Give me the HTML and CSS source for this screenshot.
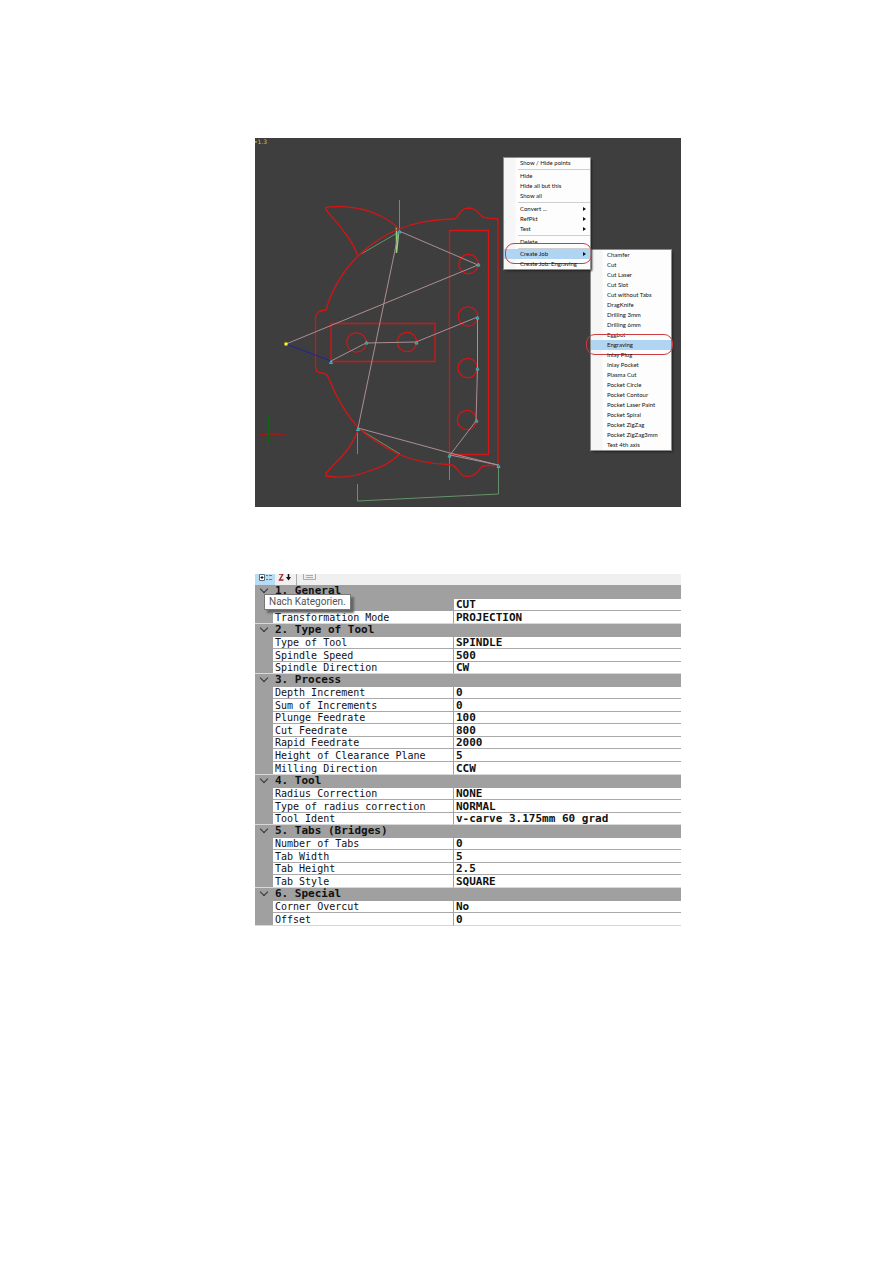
FILE: index.html
```html
<!DOCTYPE html>
<html lang="en">
<head>
<meta charset="utf-8">
<title>Create Job: Engraving</title>
<link rel="stylesheet" href="styles.css">
</head>
<body>
<main class="page">
  <section class="viewer" aria-label="Drawing">
    <svg class="drawing" viewBox="255 138 426 369" aria-hidden="true">
      <g class="green">
        <path d="M399.500 200V230M399 232L361 254M359 429L400 454M357.500 430V454M449.500 455V480M357.500 484V501L498.500 494V466"/>
        <path class="bright" d="M396.500 227V253M398.500 234L396.500 253"/>
      </g>
      <g class="red">
        <path d="M325.500 208C329 206 350 206 360 209C371 211 391 219 398 229"/>
        <path d="M325.500 208C327 214 335 218 345 233Q353 243 358 256"/>
        <path d="M498 465V219C493 218 484 219 481.500 216C477 212 476 208 468 208C461 209 460 213 457 217Q456 219 453 219C431 220 415 222 398 229.500C386 234 371 244 358 256C343 271 332 289 326 310L320 311Q316 313 315.500 318V367Q316 373 322 373Q327 373 329 379C337 399 346 414 358 427.500Q374 442 398 454C414 461 432 464 449 464.500Q454 465 457 469C461 475 463 476.500 468 476.500C475 476 478 472 481 467.500Q482 465.500 487 465.500H498"/>
        <path d="M358 430Q353 443 346.500 451C340 459 330 468 326 473.500V476C344 479 358 475 365 472.500C377 469 391 463 399 454.500"/>
        <path d="M449.500 230.500H488.500V454.500H449.500ZM331 323.500H435V361.500H331Z"/>
        <circle cx="468.500" cy="264" r="9.700"/><circle cx="468" cy="316.500" r="9.700"/>
        <circle cx="467.700" cy="368" r="9.700"/><circle cx="467" cy="420" r="9.700"/>
        <circle cx="356.500" cy="342.500" r="9.700"/><circle cx="407" cy="342" r="9.700"/>
      </g>
      <path class="axis-x" d="M259 434.500H286"/>
      <path class="axis-y" d="M268.500 416V443"/>
      <path class="rapid" d="M286 344L478 265L399 231L358 428L450 453L498 465L450 455L476 421L477.500 368V317L416 342L366 343L331 361"/>
      <path class="lead" d="M286 344L331 361"/>
      <path class="marks" d="M398 233l1.500-3l1.500 3zM477 266l1.500-3l1.500 3zM476 319l1.500-3l1.500 3zM476 370l1.500-3l1.500 3zM475 422l1.500-3l1.500 3zM415 344l1.500-3l1.500 3zM365 344l1.500-3l1.500 3zM329.500 363.500l1.500-3l1.500 3zM356.500 430.500l1.500-3l1.500 3zM448 457l1.500-3l1.500 3zM497 467.500l1.500-3l1.500 3z"/>
      <path class="start" d="M284.500 342.500h3v3h-3z"/>
      <text class="scale" x="254" y="144">•1.3</text>
    </svg>

    <div class="menu context" role="menu">
      <button role="menuitem">Show / Hide points</button>
      <hr>
      <button role="menuitem">Hide</button>
      <button role="menuitem">Hide all but this</button>
      <button role="menuitem">Show all</button>
      <hr>
      <button role="menuitem" class="more">Convert ...</button>
      <button role="menuitem" class="more">RefPkt</button>
      <button role="menuitem" class="more">Test</button>
      <hr>
      <button role="menuitem">Delete</button>
      <hr class="tight">
      <button role="menuitem" class="more active">Create Job</button>
      <button role="menuitem">Create Job: Engraving</button>
    </div>

    <div class="menu jobs" role="menu">
      <button role="menuitem">Chamfer</button>
      <button role="menuitem">Cut</button>
      <button role="menuitem">Cut Laser</button>
      <button role="menuitem">Cut Slot</button>
      <button role="menuitem">Cut without Tabs</button>
      <button role="menuitem">DragKnife</button>
      <button role="menuitem">Drilling 3mm</button>
      <button role="menuitem">Drilling 6mm</button>
      <button role="menuitem">Eggbot</button>
      <button role="menuitem" class="active">Engraving</button>
      <button role="menuitem">Inlay Plug</button>
      <button role="menuitem">Inlay Pocket</button>
      <button role="menuitem">Plasma Cut</button>
      <button role="menuitem">Pocket Circle</button>
      <button role="menuitem">Pocket Contour</button>
      <button role="menuitem">Pocket Laser Paint</button>
      <button role="menuitem">Pocket Spiral</button>
      <button role="menuitem">Pocket ZigZag</button>
      <button role="menuitem">Pocket ZigZag3mm</button>
      <button role="menuitem">Test 4th axis</button>
    </div>
  </section>

  <section class="properties" aria-label="Job properties">
    <div class="toolbar">
      <button class="tool selected" aria-label="Categorized">
        <svg width="20" height="11" viewBox="0 0 20 11"><path d="M4.500 .5h5v6h-5z" fill="#fff" stroke="#5c7080"/><path d="M5.500 3.500h3M7 2v3" stroke="#111"/><path d="M11 1.500h2m1 0h3M11 5.500h2m1 0h3" stroke="#55809c"/></svg>
      </button>
      <button class="tool" aria-label="Alphabetical">
        <svg width="17" height="11" viewBox="0 0 17 11"><path d="M4 0h4L4.500 6h4" fill="none" stroke="#a02222" stroke-width="1.300"/><path d="M13.500 0v5" stroke="#111" stroke-width="1.500"/><path d="M11 3h5l-2.500 3.500z" fill="#111"/></svg>
      </button>
      <span class="divider"></span>
      <button class="tool" aria-label="Property pages">
        <svg width="20" height="11" viewBox="0 0 20 11"><path d="M2.500 -1v6.500h12V-1" fill="#eee" stroke="#aaa"/><path d="M5 1.500h7M5 3.500h7" stroke="#aaa"/></svg>
      </button>
    </div>
    <div class="tooltip" role="tooltip">Nach Kategorien.</div>
    <table class="grid">
      <colgroup><col class="gutter"><col class="names"><col></colgroup>
      <tbody class="first">
        <tr class="category"><td><button class="fold" aria-label="Collapse General"></button></td><th colspan="2">1. General</th></tr>
        <tr><td></td><td class="picked"></td><td>CUT</td></tr>
        <tr><td></td><th scope="row">Transformation Mode</th><td>PROJECTION</td></tr>
      </tbody>
      <tbody>
        <tr class="category"><td><button class="fold" aria-label="Collapse Type of Tool"></button></td><th colspan="2">2. Type of Tool</th></tr>
        <tr><td></td><th scope="row">Type of Tool</th><td>SPINDLE</td></tr>
        <tr><td></td><th scope="row">Spindle Speed</th><td>500</td></tr>
        <tr><td></td><th scope="row">Spindle Direction</th><td>CW</td></tr>
      </tbody>
      <tbody class="process">
        <tr class="category"><td><button class="fold" aria-label="Collapse Process"></button></td><th colspan="2">3. Process</th></tr>
        <tr><td></td><th scope="row">Depth Increment</th><td>0</td></tr>
        <tr><td></td><th scope="row">Sum of Increments</th><td>0</td></tr>
        <tr><td></td><th scope="row">Plunge Feedrate</th><td>100</td></tr>
        <tr><td></td><th scope="row">Cut Feedrate</th><td>800</td></tr>
        <tr><td></td><th scope="row">Rapid Feedrate</th><td>2000</td></tr>
        <tr><td></td><th scope="row">Height of Clearance Plane</th><td>5</td></tr>
        <tr><td></td><th scope="row">Milling Direction</th><td>CCW</td></tr>
      </tbody>
      <tbody>
        <tr class="category"><td><button class="fold" aria-label="Collapse Tool"></button></td><th colspan="2">4. Tool</th></tr>
        <tr><td></td><th scope="row">Radius Correction</th><td>NONE</td></tr>
        <tr><td></td><th scope="row">Type of radius correction</th><td>NORMAL</td></tr>
        <tr><td></td><th scope="row">Tool Ident</th><td>v-carve 3.175mm 60 grad</td></tr>
      </tbody>
      <tbody>
        <tr class="category"><td><button class="fold" aria-label="Collapse Tabs"></button></td><th colspan="2">5. Tabs (Bridges)</th></tr>
        <tr><td></td><th scope="row">Number of Tabs</th><td>0</td></tr>
        <tr><td></td><th scope="row">Tab Width</th><td>5</td></tr>
        <tr><td></td><th scope="row">Tab Height</th><td>2.5</td></tr>
        <tr><td></td><th scope="row">Tab Style</th><td>SQUARE</td></tr>
      </tbody>
      <tbody>
        <tr class="category"><td><button class="fold" aria-label="Collapse Special"></button></td><th colspan="2">6. Special</th></tr>
        <tr><td></td><th scope="row">Corner Overcut</th><td>No</td></tr>
        <tr><td></td><th scope="row">Offset</th><td>0</td></tr>
      </tbody>
    </table>
  </section>
</main>
</body>
</html>
```
FILE: styles.css
```css
* { box-sizing: border-box; }
body { margin: 0; background: #fff; color: #111; font-family: Lato, "Open Sans", sans-serif; }
button { margin: 0; padding: 0; border: 0; background: none; color: inherit; font: inherit; }

.page {
  display: grid;
  grid-template-columns: 255fr 426fr 212fr;
  row-gap: 67px;
  padding: 138px 0 336px;
}
.viewer, .properties { grid-column: 2; position: relative; min-width: 0; }
.viewer { background: #3e3e3e; }

.drawing { display: block; width: 100%; height: auto; fill: none; stroke-width: 1; }
.red { stroke: #d61414; stroke-width: 1.3; }
.green { stroke: #659369; }
.bright { stroke: #8fd07f; stroke-width: 1.5; }
.rapid { stroke: #ae8d92; }
.lead { stroke: #22229c; }
.axis-x { stroke: #9c1b1b; }
.axis-y { stroke: #146314; }
.marks { fill: #2b7f80; stroke: #3fb5b6; stroke-width: 1; }
.start { fill: #ffff20; }
.scale { fill: #c6c62a; font: 6px "DejaVu Sans", sans-serif; }

.menu {
  position: absolute;
  display: flex;
  flex-direction: column;
  background: linear-gradient(90deg, #f6f6f6 0 11px, #fdfdfd 12px);
  outline: 1px solid #8d8d8d;
  box-shadow: 2px 2px 2px #222;
  font-size: 6px;
  line-height: 10px;
  color: #111;
}
.menu button { position: relative; height: 10px; padding-left: 16px; text-align: left; white-space: nowrap; }
.menu hr { width: calc(100% - 14px); height: 1px; margin: 1px 0 1px 14px; border: 0; background: #cfcfcf; }
.menu .tight { margin-bottom: 0; }
.menu .active { background: #b0d5f2; }
.more::before {
  content: "";
  position: absolute;
  right: 4px;
  top: 3px;
  border: 2px solid transparent;
  border-left: 3px solid #111;
  border-right: 0;
}
.active::after {
  content: "";
  position: absolute;
  inset: -6px -2px -5px 1px;
  border: 1px solid #cc3b40;
  border-radius: 9px;
}
.context { left: 249px; top: 20px; width: 86px; z-index: 1; }
.jobs { left: 336px; top: 112px; width: 80px; }
.jobs .active::after { left: -5px; }

.toolbar { display: flex; height: 11px; background: #f0f0f0; overflow: hidden; }
.tool { display: flex; }
.selected { background: #b9dcf5; }
.toolbar .divider { width: 1px; margin: 0 4px; background: #aaa; }

.tooltip {
  position: absolute;
  left: 9px;
  top: 20px;
  padding: 0 4px;
  border: 1px solid #777;
  background: #fff;
  box-shadow: 3px 3px 2px #666;
  color: #555;
  font: 10px/14px Roboto, sans-serif;
  white-space: nowrap;
}

.grid {
  width: 100%;
  table-layout: fixed;
  border-collapse: separate;
  border-spacing: 0;
  font: 700 11px/11px "DejaVu Sans Mono", monospace;
  color: #111;
}
.gutter { width: 18px; }
.names { width: 180px; }
.grid tr { height: 12px; }
.grid tr:nth-child(odd) { height: 13px; }
.grid .first tr:first-child { height: 14px; }
.grid .process tr:last-child { height: 13px; }
.grid td, .grid th { padding: 0 0 0 2px; border-bottom: 1px solid #a9a9a9; text-align: left; white-space: nowrap; overflow: hidden; }
.grid th { font-weight: 400; font-size: 10px; }
.grid td:last-child { border-left: 1px solid #a0a0a0; }
.grid td:first-child { padding: 0; background: #a0a0a0; border-color: #a0a0a0; }
.grid tr:last-child > * { border-bottom-color: #d8d8d8; }
.grid .category > *, .grid .picked { background: #a0a0a0; border-color: #a0a0a0; }
.grid .category th { font-weight: 700; font-size: 11px; vertical-align: top; }
.grid .category td { vertical-align: top; }
.fold { display: flex; justify-content: center; width: 18px; height: 9px; }
.fold::before {
  content: "";
  width: 5px;
  height: 5px;
  margin-top: 1px;
  border: solid #333;
  border-width: 0 1px 1px 0;
  transform: rotate(45deg);
}
```
